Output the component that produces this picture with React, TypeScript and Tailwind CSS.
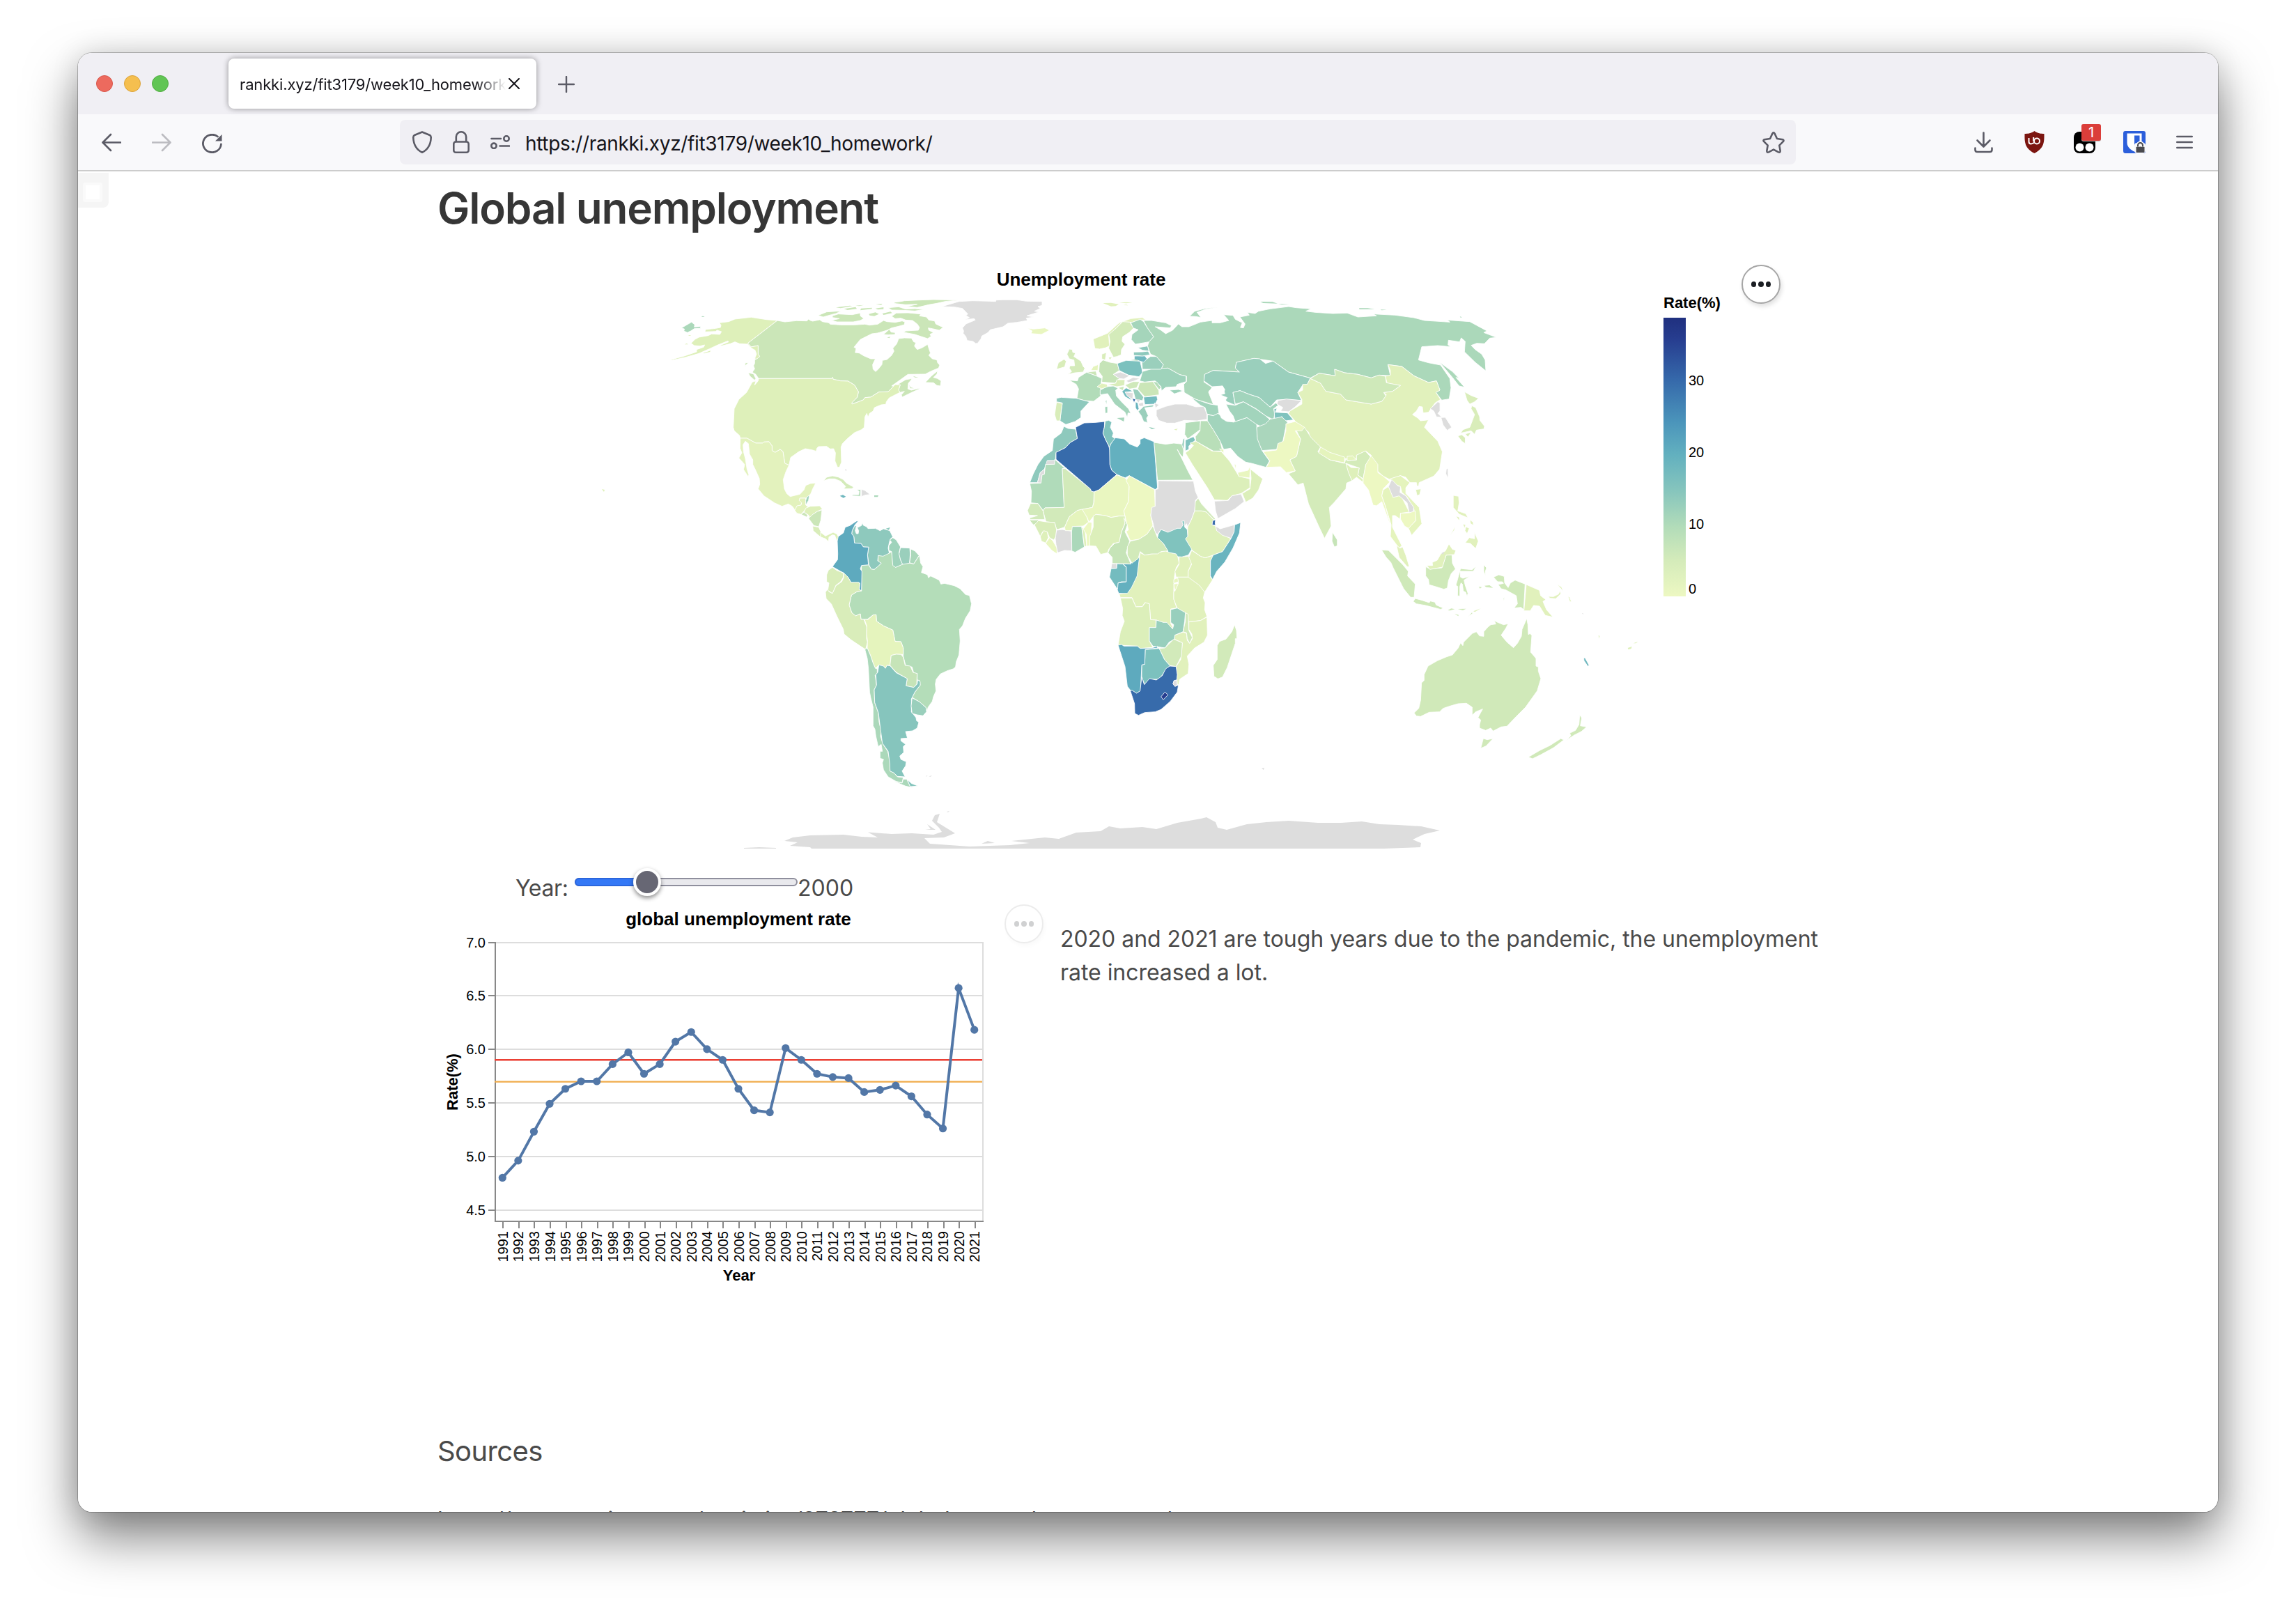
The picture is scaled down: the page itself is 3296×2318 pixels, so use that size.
import React from "react";

type Shape = [string, string];

const GREY = "#dddddd";
const US = "#def0ba";
const CA = "#cbe6b8";
const RU = "#abd8ba";
const ID = "#cfe9b9";

/* Country outlines, grouped by map sheet. Each sheet has its own origin and scale. */
const northAmerica: Shape[] = [
  [CA, "527,180 560,186 610,181 655,182 662,174 670,180 680,183 710,177 722,185 750,190 755,196 800,199 860,199 905,196 925,200 960,196 985,180 1000,185 1035,188 1065,182 1077,186 1075,198 1050,205 1020,212 1000,222 960,234 935,237 915,247 885,262 858,295 867,300 863,318 880,320 900,332 930,345 950,345 938,370 940,390 951,400 962,390 978,370 980,352 1000,348 1020,330 1030,312 1025,300 1042,280 1050,258 1075,255 1105,256 1115,272 1125,275 1118,290 1130,305 1150,298 1175,283 1180,300 1187,320 1180,330 1195,345 1215,350 1218,362 1227,372 1222,385 1190,398 1165,411 1090,412 1065,430 1020,462 1038,463 1055,450 1080,435 1108,430 1105,435 1092,450 1090,475 1105,480 1138,472 1140,475 1110,488 1065,510 1062,500 1075,485 1055,490 1050,478 1057,457 1035,456 1005,487 965,488 930,510 905,512 898,522 850,540 848,535 872,510 877,487 860,458 832,441 800,440 768,433 766,425 762,430 447,430 435,412 420,403 430,388 425,375 430,365 430,350 452,335 445,325 445,288 415,294 400,278"],
  [US, "447,430 762,430 766,425 768,433 800,440 832,441 860,458 877,487 872,510 848,535 850,540 898,522 905,512 930,510 965,488 1005,487 1035,456 1057,457 1050,478 1055,490 1035,500 1010,513 997,530 995,541 975,543 946,555 940,570 925,580 918,597 913,580 905,595 902,640 890,650 860,663 830,688 808,710 802,725 804,790 795,812 787,812 776,785 778,750 770,732 755,733 740,722 705,723 698,730 695,743 680,738 648,732 620,745 585,770 578,803 560,795 552,745 540,735 518,748 505,740 505,720 492,702 470,703 465,708 435,708 397,687 368,687 365,675 342,655 338,640 342,560 362,520 395,490 420,445 435,440 430,458 445,440"],
  [US, "527,180 480,176 415,166 345,174 318,185 278,190 285,200 283,210 262,214 218,219 216,229 262,227 268,222 287,228 280,240 245,238 230,245 190,252 172,262 156,278 170,288 195,290 215,285 210,295 180,305 180,315 130,332 65,350 75,351 130,339 190,322 235,302 272,285 315,268 318,272 280,288 285,290 325,280 345,272 365,280 400,282 410,293 418,300 432,308 438,325 430,345 440,345 452,335 445,325 445,288 415,294 400,278"],
  [US, "208,320 240,310 238,315 212,322"],
  [US, "128,283 138,279 143,283"],
  [US, "143,243 157,243 150,246"],
  [RU, "115,212 158,187 172,198 170,208 197,206 197,214 170,215 155,225 140,232 125,225 128,217"],
  [RU, "200,163 207,161 215,163 207,165"],
  [CA, "402,405 425,410 435,430 430,437 410,420"],
  [CA, "390,362 403,362 392,372 388,385"],
  [CA, "1218,397 1190,420 1165,447 1200,448 1215,460 1230,462 1233,440 1218,430 1200,425 1215,410"],
  [CA, "1112,419 1135,426 1120,425"],
  [CA, "1096,458 1102,468 1116,472 1100,472"],
  [CA, "703,158 740,143 785,140 800,141 780,150 760,155 725,165"],
  [CA, "765,160 790,152 850,155 885,148 885,160 900,172 885,180 855,186 785,186 760,180 795,172 765,167"],
  [CA, "780,124 840,116 850,118 800,127"],
  [CA, "815,130 865,122 870,130 830,135"],
  [CA, "888,128 935,125 935,130 885,136"],
  [CA, "922,152 950,145 965,152 945,161 925,158"],
  [CA, "950,128 985,123 985,131 960,133"],
  [CA, "952,110 980,108 975,113"],
  [CA, "865,116 900,113 880,118"],
  [CA, "1030,102 1060,98 1075,95 1140,92 1200,90 1310,92 1250,98 1215,106 1180,112 1130,124 1085,120 1130,110 1080,112 1035,107"],
  [CA, "1005,125 1050,121 1080,131 1120,129 1160,133 1120,139 1070,136 1020,135"],
  [CA, "980,150 1015,142 1022,148 985,156"],
  [CA, "1020,162 1040,148 1090,147 1145,152 1140,160 1170,165 1180,178 1205,182 1210,195 1242,210 1225,222 1195,215 1178,212 1180,222 1200,232 1185,240 1190,248 1175,258 1150,250 1120,240 1072,231 1080,225 1135,222 1140,210 1130,195 1110,180 1080,178 1060,170 1035,172"],
  [CA, "985,240 1010,218 1018,230 1035,232 1035,240 1005,242"],
  [CA, "1000,253 1015,250 1010,256"],
  ["#e3f2bd", "368,687 397,687 435,708 465,708 470,703 492,702 505,720 505,740 518,748 540,735 552,745 560,795 578,803 565,830 553,865 558,905 568,925 583,938 625,928 642,910 650,890 670,882 693,880 680,905 672,925 665,935 650,945 625,945 622,955 632,965 630,975 612,980 605,998 592,980 575,970 548,980 515,965 470,935 445,905 452,885 450,860 432,820 422,800 422,780 408,755 403,710 390,700 380,715 382,745 390,775 397,820 405,845 402,852 382,822 387,800 362,772 375,750 367,730"],
  ["#e3f2bd", "625,945 650,945 650,975 660,982 643,1000 630,1015 612,1010 603,998 612,978 630,975 632,965 622,955"],
  ["#9fd3bb", "666,932 662,955 650,975 650,955 655,940"],
  [US, "650,988 670,980 710,978 722,992 700,1002 680,1015 668,1028 662,1018 643,1005"],
  [CA, "630,1015 643,1005 658,1018 655,1027"],
  [CA, "662,1032 680,1015 700,1002 720,996 715,1040 706,1068 685,1063"],
  ["#d9edba", "680,1065 706,1070 716,1092 714,1112 705,1105 682,1085"],
  [US, "714,1092 735,1108 768,1092 785,1100 792,1115 785,1130 775,1105 765,1103 750,1112 748,1132 735,1120 714,1112"],
  ["#d4ebba", "726,871 740,855 765,849 790,854 812,865 825,880 856,897 850,904 813,905 822,895 800,872 775,862 750,862"],
  ["#70b8bf", "797,935 810,931 823,938 812,944"],
  ["#b4ddb9", "870,908 887,908 886,937 850,935 852,930 878,930 880,916"],
  [GREY, "890,907 905,912 927,929 905,932 890,938"],
  [RU, "945,933 963,933 960,940 945,940"],
  [GREY, "819,822 825,820 824,829"],
  [GREY, "1236,120 1310,98 1370,95 1440,97 1468,98 1470,92 1500,91 1560,91 1600,97 1668,98 1668,115 1650,120 1660,128 1635,140 1655,143 1602,160 1633,165 1600,170 1605,180 1560,188 1520,192 1500,207 1445,220 1435,232 1408,247 1405,258 1390,278 1382,279 1370,270 1345,266 1340,250 1328,235 1330,225 1325,212 1340,195 1380,178 1375,172 1335,177 1355,168 1340,158 1348,152 1325,128 1290,122"],
];

const southAmerica: Shape[] = [
  ["#b4ddb9", "290,275 320,272 332,290 345,292 362,278 375,265 362,258 362,232 410,222 420,215 425,268 437,283 465,270 490,263 515,268 530,245 540,232 545,265 555,280 548,305 575,315 578,328 588,320 625,338 632,355 648,352 690,362 715,375 738,400 755,404 764,440 758,470 738,502 725,535 712,550 715,600 710,660 698,690 695,712 685,720 660,728 630,742 612,765 608,785 611,815 600,840 595,860 577,885 572,902 568,887 540,862 508,843 520,820 543,790 540,770 530,768 530,740 515,738 508,712 480,705 470,665 470,630 460,603 435,602 425,553 385,535 355,515 353,487 340,488 315,507 288,507 285,483 265,492 248,478 237,445 247,402 270,388 290,384"],
  ["#8ec9bd", "262,103 250,125 248,138 257,150 260,178 288,180 298,195 321,196 316,230 322,272 332,290 345,292 362,278 375,265 360,255 362,232 383,235 410,222 405,200 410,175 415,160 425,152 412,125 385,117 370,125 350,115 318,116 312,108 298,102 294,90 290,103 272,112 278,125 276,138 268,138 263,125 268,105"],
  ["#8ec9bd", "395,116 413,111 408,122"],
  ["#5eaabe", "277,83 262,100 250,125 248,138 257,150 260,178 288,180 298,195 321,196 316,230 320,272 290,275 285,290 292,300 290,384 280,378 283,350 245,348 232,325 212,306 200,300 165,280 187,250 188,225 186,170 190,150 212,135 220,110 240,103 268,84"],
  ["#9fd3bb", "425,155 440,165 458,195 452,220 458,250 467,270 437,283 425,275 420,215 408,210 408,190 420,175 412,165"],
  ["#9acfbc", "458,198 498,200 500,225 497,265 467,270 458,250 452,225"],
  [RU, "502,204 520,212 538,232 515,268 497,263 502,235"],
  ["#d9edba", "212,306 232,325 245,348 278,347 283,355 280,378 290,384 270,388 247,402 237,445 248,478 265,492 285,483 288,507 300,507 313,540 312,590 316,605 308,637 290,625 245,595 215,570 212,550 185,495 160,440 138,418 135,390 145,375 150,388 165,395 180,362 205,345 214,325"],
  ["#d9edba", "165,283 185,297 200,302 212,308 212,325 200,345 180,360 165,395 145,382 150,350 140,345 140,315 148,295"],
  ["#e5f4bd", "303,507 318,508 340,488 353,487 355,515 385,535 425,553 435,602 460,603 470,630 470,658 440,657 418,662 413,705 400,705 393,718 385,708 365,703 350,718 340,695 330,665 315,630 316,600 312,570 313,535"],
  ["#c6e4b8", "418,662 440,657 460,658 470,670 478,705 500,708 512,735 530,740 528,785 515,800 482,793 487,762 440,735 413,705"],
  [RU, "315,630 330,665 340,695 350,718 358,720 358,738 349,748 355,790 345,810 347,865 363,910 366,950 375,985 372,1010 383,1045 403,1075 410,1105 415,1145 413,1160 430,1168 445,1185 470,1188 465,1210 440,1205 405,1185 385,1155 380,1125 385,1110 370,1105 370,1075 380,1075 375,1045 362,1055 352,1010 348,980 340,965 340,885 330,845 325,820 320,720 315,675 305,637"],
  ["#86c5bd", "365,703 385,708 393,718 400,705 413,707 440,737 487,762 482,793 515,800 530,785 532,768 543,775 543,790 520,820 505,850 505,905 525,930 527,943 537,950 530,975 510,987 480,990 488,1018 460,1020 460,1030 480,1045 470,1055 472,1080 455,1095 460,1110 483,1120 480,1138 465,1160 478,1185 445,1183 430,1168 413,1160 412,1130 405,1075 380,1040 372,980 363,910 347,865 345,810 355,790 352,745 360,735"],
  [RU, "470,1195 485,1195 500,1226 514,1232 480,1225 428,1203 465,1212"],
  ["#86c5bd", "487,1197 505,1213 534,1225 500,1227"],
  ["#9acfbc", "508,845 540,862 568,887 570,905 555,922 530,918 508,912 504,880"],
  [GREY, "566,1183 574,1179 573,1183"],
  [GREY, "580,1183 594,1179 588,1184"],
];

const northSheet: Shape[] = [
  ["#8ec9bd", "262,636 280,645 312,648 320,688 290,705 268,728 228,748 225,782 190,783 178,820 160,835 148,878 115,878 130,840 150,800 175,765 212,740 217,690 250,665"],
  [GREY, "190,785 222,782 222,799 185,799"],
  [GREY, "160,835 178,820 180,842 168,845 163,880 148,878"],
  ["#b0dbba", "115,882 163,880 168,845 178,842 182,800 222,799 222,778 268,818 255,818 263,985 180,987 172,998 150,968 120,965 122,915"],
  ["#d2eaba", "255,818 268,818 376,905 380,915 392,918 390,965 385,985 345,993 320,998 285,1025 265,1070 240,1078 230,1080 222,1050 185,1047 172,1000 180,987 263,985"],
  ["#376bab", "312,640 350,621 400,619 437,615 436,640 430,665 440,690 455,720 460,740 460,800 468,825 490,843 412,910 392,918 380,915 376,905 228,778 228,748 268,728 290,705 320,688"],
  ["#80c3be", "440,613 455,610 468,618 462,640 475,665 470,680 483,690 465,710 458,725 440,690 430,665 436,640"],
  ["#64b0bf", "483,685 522,690 545,712 578,725 590,710 590,692 608,685 650,702 665,900 655,908 543,848 525,858 490,843 468,825 460,800 458,725 465,710"],
  ["#b9dfb9", "650,705 700,713 735,708 770,712 778,735 775,768 765,760 750,735 775,785 797,830 817,867 665,868"],
  ["#e9f6c0", "412,910 490,845 525,858 535,870 543,895 540,960 520,1000 525,1022 500,1022 465,1028 440,1020 400,1015 388,1025 370,1048 360,1025 342,1012 342,993 385,985 392,960 392,918"],
  ["#edf8c2", "543,848 652,908 655,980 640,990 636,1020 645,1062 620,1100 585,1122 548,1128 530,1088 540,1082 530,1045 520,1000 540,960 543,895 530,870"],
  [GREY, "668,870 820,872 828,915 840,942 828,955 825,1000 812,1035 795,1070 790,1055 770,1080 750,1085 710,1092 680,1080 665,1100 655,1095 645,1050 636,1020 640,985 655,980 655,908 667,905"],
  ["#d2eaba", "840,945 855,970 915,1035 908,1038 875,1005 855,1000 825,1000 828,960"],
  ["#def0ba", "825,1000 855,1000 875,1005 910,1042 900,1060 915,1065 920,1085 980,1120 945,1175 905,1190 870,1202 850,1195 812,1168 785,1120 795,1110 795,1070 812,1035"],
  ["#376bab", "903,1042 915,1038 913,1052 915,1062 900,1060"],
  [GREY, "915,1066 935,1077 995,1060 995,1090 982,1118 945,1105 920,1085"],
  ["#6ab4bf", "997,1060 1023,1050 1018,1095 990,1160 955,1220 920,1260 902,1295 893,1280 893,1215 905,1190 945,1175 982,1118 995,1090"],
  ["#80c3be", "668,1100 680,1080 710,1092 750,1075 765,1075 775,1060 770,1045 780,1042 782,1070 793,1080 795,1110 785,1120 812,1165 798,1190 770,1198 752,1197 745,1185 712,1178 690,1140 665,1115"],
  ["#d2eaba", "118,968 150,968 172,1000 180,1037 115,1037 115,1030 148,1020 112,1018 105,998"],
  [CA, "113,1039 152,1039 150,1052 130,1060"],
  ["#d9edba", "152,1042 185,1047 222,1050 230,1080 228,1110 218,1125 200,1115 190,1090 170,1090 160,1110 135,1060"],
  ["#def0ba", "160,1110 175,1085 190,1090 195,1115 183,1138 165,1130"],
  ["#e9f6c0", "183,1140 200,1115 215,1130 232,1160 232,1185 210,1170"],
  [GREY, "230,1083 255,1080 293,1087 297,1172 265,1170 235,1180 228,1145 225,1120"],
  ["#e5f4bd", "265,1070 285,1025 320,998 340,993 360,1025 368,1048 345,1065 300,1067 297,1085 268,1085"],
  [RU, "298,1067 338,1067 350,1155 310,1178 296,1172 295,1090"],
  ["#def0ba", "340,1070 352,1080 360,1150 350,1155"],
  ["#edf8c2", "345,1078 368,1048 382,1050 380,1095 373,1150 360,1152 358,1100"],
  ["#dcefba", "388,1022 400,1015 440,1020 465,1028 500,1022 525,1022 528,1045 510,1090 500,1135 475,1140 455,1165 450,1180 420,1187 400,1152 373,1150 373,1110 388,1070"],
  ["#c6e4b8", "520,1030 535,1060 525,1090 545,1130 530,1180 550,1228 470,1226 470,1200 452,1180 460,1160 480,1140 500,1135 510,1090 525,1055"],
  ["#d2eaba", "548,1130 585,1122 620,1100 645,1065 665,1115 690,1140 710,1172 680,1175 665,1185 640,1185 610,1190 590,1175 582,1205 555,1225 535,1190 535,1155"],
  ["#e9f6c0", "105,213 130,217 180,212 200,222 165,240 120,236 125,225"],
  ["#e1f1bc", "430,105 465,104 498,110 485,118 465,119"],
  ["#e1f1bc", "500,103 530,101 557,103 530,106"],
  ["#e1f1bc", "518,114 530,112 538,115"],
  ["#e1f1bc", "388,260 450,235 500,190 550,172 600,167 615,178 590,177 555,188 510,188 480,220 455,245 458,290 440,298 415,303 395,300"],
  ["#d4ebba", "455,240 485,215 515,185 545,187 562,212 545,230 515,250 512,270 525,282 510,305 508,328 490,335 475,338 455,300 460,270"],
  [RU, "605,180 640,180 700,190 725,202 720,212 655,207 680,222 700,237 730,222 755,195 770,207 800,207 850,187 900,180 900,190 935,190 972,180 950,155 990,158 1000,175 1030,190 1022,210 1035,212 1042,195 1020,165 1060,157 1052,145 1085,150 1100,140 1150,130 1230,120 1262,125 1327,130 1304,140 1344,145 1420,150 1482,148 1528,165 1608,160 1595,152 1688,157 1769,168 1815,180 1924,187 1912,178 2010,185 2084,225 2070,232 2125,253 2096,256 2073,280 2040,278 2016,287 2033,305 2061,325 2076,350 2079,397 2033,360 1987,315 1990,270 1973,255 1966,272 1918,265 1916,285 1929,293 1872,288 1803,293 1789,350 1832,362 1884,372 1924,430 1929,470 1921,518 1889,523 1864,490 1881,480 1866,440 1832,447 1769,418 1717,378 1657,370 1668,418 1620,415 1585,427 1528,412 1470,405 1428,390 1430,418 1361,407 1323,428 1229,402 1163,355 1080,343 1005,360 1000,385 1018,402 905,395 868,412 865,445 900,468 885,490 905,540 925,548 865,530 830,520 780,490 778,455 790,443 790,420 760,413 710,385 680,390 690,370 660,335 635,325 622,290 628,272 648,250 620,210"],
  ["#a5d5bb", "550,190 590,175 605,185 620,210 648,250 628,272 570,282 552,262 555,240 582,220 560,212"],
  [RU, "803,162 825,140 870,128 928,122 870,132 835,145 852,167 830,163"],
  [RU, "1108,99 1160,100 1182,107 1120,105"],
  [RU, "1186,108 1232,111 1200,112"],
  [RU, "1533,127 1570,127 1600,131 1535,132"],
  [RU, "1625,133 1652,134 1630,136"],
  [RU, "1967,163 1977,166 1970,167"],
  [RU, "1880,360 1935,400 1964,430 1950,425 1987,467 1964,462 1935,425"],
  ["#d4ebba", "285,303 298,305 300,317 312,320 305,335 335,355 345,378 352,385 345,402 310,405 278,412 295,400 285,385 288,375 308,375 305,350 285,345 275,325"],
  ["#d9edba", "238,362 262,347 272,355 265,380 230,390"],
  ["#d9edba", "425,325 445,318 442,335 440,350 425,345"],
  ["#d9edba", "455,340 468,338 460,348"],
  ["#c6e4b8", "415,365 430,350 460,360 492,365 500,395 475,412 500,430 482,450 425,445 427,420 412,400"],
  ["#e5f4bd", "388,378 410,370 408,395 378,395"],
  [CA, "360,402 400,398 405,420 385,412"],
  ["#b2dcb9", "285,437 320,440 325,425 360,403 405,420 425,430 420,460 420,505 390,528 350,525 318,515 325,475 315,455"],
  ["#8ec9bd", "230,515 250,511 315,515 372,530 335,570 335,598 310,615 270,628 245,612 250,570 255,535 230,530"],
  ["#d9edba", "230,532 255,537 250,570 245,612 230,612 222,585"],
  ["#a5d5bb", "418,480 445,465 475,462 495,472 485,480 488,505 510,530 540,560 550,580 538,578 535,598 525,575 480,540 450,495 418,500"],
  ["#a5d5bb", "490,600 522,598 520,615"],
  ["#a5d5bb", "438,552 450,550 450,578 440,580"],
  ["#a5d5bb", "440,527 447,522 446,543"],
  ["#e1f1bc", "405,465 425,450 448,455 450,465 425,474"],
  ["#d9edba", "448,455 485,450 490,435 525,435 522,460 490,465"],
  ["#7cc1be", "492,365 530,352 590,355 598,390 600,405 585,422 540,415 500,395"],
  [GREY, "475,412 505,402 545,418 520,432 500,430"],
  [GREY, "530,440 560,425 590,430 560,442 540,447"],
  ["#cfe9ba", "525,458 560,443 588,443 575,470 545,475"],
  [CA, "588,448 645,443 670,480 672,500 610,508 580,475"],
  ["#9fd3bb", "592,430 600,400 640,388 710,385 760,413 788,420 788,443 750,455 745,465 700,468 682,483 680,465 655,440 610,445 588,440"],
  ["#b4ddb9", "645,443 662,445 680,468 672,478"],
  ["#9fd3bb", "717,480 755,477 775,483 738,496"],
  ["#9acfbc", "598,360 635,335 660,335 690,370 680,390 600,390"],
  ["#70b8bf", "565,333 610,332 620,345 605,360 565,347"],
  ["#8ec9bd", "562,316 600,315 625,312 632,328 600,333 562,330"],
  ["#8ec9bd", "580,297 622,290 628,312 600,308"],
  [RU, "550,351 578,347 580,353"],
  [CA, "498,470 520,465 515,480"],
  ["#74bcbf", "512,485 530,470 560,485 528,488 555,525 525,508"],
  [GREY, "525,488 560,492 558,520 535,505"],
  ["#98cfbd", "558,474 580,478 605,510 600,525 570,520"],
  ["#376bab", "556,515 571,519 564,534"],
  ["#6ab4bf", "570,530 580,535 585,560 577,568 570,555"],
  [GREY, "582,538 603,532 605,548 588,550"],
  [GREY, "573,520 590,520 583,533"],
  ["#74bcbf", "605,510 662,505 665,520 655,540 610,542"],
  ["#9acfbc", "582,572 605,550 650,543 645,552 610,556 625,590 618,600 622,620 605,615 595,590"],
  ["#9acfbc", "628,639 656,644 640,648"],
  [GREY, "660,565 700,550 740,540 790,540 830,552 865,550 878,585 878,605 835,612 780,610 740,622 705,622 670,610 660,590"],
  [GREY, "652,535 672,543 656,557"],
  ["#e1f1bc", "736,649 752,646 746,653"],
  ["#b4ddb9", "785,620 850,612 848,650 795,690 782,670"],
  ["#b9dfb9", "850,612 880,612 905,650 935,700 945,742 905,742 830,700 828,680 848,655"],
  ["#80c3be", "785,695 820,680 828,695 800,720 800,735 785,742"],
  ["#98cfbd", "775,690 782,688 778,740 770,715"],
  ["#a2d4bc", "810,512 860,530 890,540 925,545 930,580 905,590 878,582 870,555 850,545"],
  ["#a2d4bc", "880,585 905,590 925,580 950,600 965,615 1000,615 1050,598 1092,625 1095,680 1115,740 1147,785 1132,812 1070,795 1045,790 1010,765 980,730 950,735 935,700 905,650 880,612"],
  ["#dcefba", "830,700 900,742 940,745 975,785 1000,825 1015,850 1062,862 1063,900 1025,925 985,935 965,955 910,952 880,900 815,800 785,750 805,735 820,718 805,708"],
  ["#e5f4bd", "932,733 950,735 950,752"],
  ["#e9f6c0", "1010,835 1055,825 1065,805 1062,858 1015,852"],
  ["#e9f6c0", "995,798 1003,802 1002,822"],
  ["#dcefba", "1065,820 1118,862 1100,910 1075,945 1045,962 1030,925 1063,905 1068,860"],
  [GREY, "910,958 970,955 985,935 1025,927 1038,960 1000,990 925,1033 915,1000"],
  ["#9acfbc", "1005,360 1080,343 1105,345 1130,365 1163,355 1229,402 1323,428 1310,455 1290,458 1269,490 1285,524 1220,520 1178,522 1150,553 1103,512 1060,498 1020,482 990,490 1000,545 965,530 935,500 955,495 945,462 900,465 865,440 868,412 905,395 1018,402 1000,385"],
  ["#a2d4bc", "990,490 1020,482 1060,498 1103,512 1150,553 1175,535 1185,545 1165,560 1170,580 1165,608 1130,590 1090,560 1035,530 1000,540"],
  ["#a2d4bc", "960,540 1000,545 1035,530 1090,562 1130,590 1150,608 1120,640 1092,628 1050,598 1000,615 990,590 975,570"],
  ["#80c3be", "1167,560 1180,558 1172,575 1225,578 1250,608 1215,612 1200,593 1190,605 1170,608"],
  [GREY, "1183,525 1220,518 1285,525 1260,550 1230,573 1195,570 1205,555 1180,540"],
  ["#aad6bc", "1092,640 1130,625 1150,605 1200,595 1225,618 1215,650 1205,700 1180,735 1115,740 1095,690"],
  ["#ffffff", "885,485 905,468 945,462 955,478 950,490 935,500 965,512 950,535 960,565 990,590 995,618 960,613 940,600 930,575 925,540 905,510"],
];

const southAfrica: Shape[] = [
  ["#e1f1bc", "590,220 610,230 640,225 700,212 720,220 750,225 758,265 745,285 738,320 735,370 735,420 748,458 722,462 722,525 735,548 720,540 690,520 660,510 635,508 630,440 610,435 600,452 572,453 555,413 505,413 500,398 515,395 535,390 553,370 553,335 575,320 585,250"],
  ["#64b0bf", "565,240 587,240 577,320 553,370 535,395 498,395 490,375 495,350 530,345 530,280 515,268 550,268"],
  ["#74bcbf", "490,267 515,268 530,283 530,345 510,345 495,350 493,378 458,325 465,288 488,287"],
  [GREY, "468,267 489,266 489,287 465,287"],
  ["#e1f1bc", "758,238 800,235 812,265 797,300 797,325 745,325 740,300 758,270"],
  ["#e1f1bc", "812,210 850,235 870,242 905,232 893,255 893,325 902,337 868,390 845,370 797,325 797,300 812,270 800,240"],
  ["#e1f1bc", "750,325 797,325 845,360 868,390 862,415 870,435 868,465 878,495 850,512 800,518 785,480 750,460 735,420 735,390 755,350"],
  ["#e9f6c0", "735,335 752,328 755,345 735,352"],
  ["#e9f6c0", "735,355 755,352 740,385"],
  ["#dcefba", "505,415 555,415 572,453 600,452 612,435 630,440 635,508 658,510 658,542 630,542 630,600 645,628 590,632 578,622 495,618 505,560 522,515 513,490 515,460"],
  ["#98cfbd", "722,465 750,458 785,478 782,515 775,560 740,575 738,592 715,605 697,630 645,622 630,600 630,542 658,542 660,510 690,520 705,520 730,548 735,530 722,520"],
  ["#e1f1bc", "800,518 850,512 878,497 880,575 865,605 825,630 793,665 800,700 797,740 760,765 757,788 750,788 748,745 745,710 765,680 772,608 738,592 740,575 775,562 790,567 793,597 803,610 815,590 813,570 800,550"],
  ["#d2eaba", "785,478 797,485 800,555 815,585 803,610 793,590 790,565 775,560 785,515"],
  ["#d2eaba", "672,632 697,630 735,592 772,608 768,665 745,710 718,706 695,680"],
  ["#7cc1be", "612,637 672,632 695,680 718,706 690,740 672,765 650,765 630,765 610,788 597,755 597,703 610,700"],
  ["#5eaabe", "495,618 510,615 520,622 578,622 590,632 640,630 665,622 665,630 612,637 610,700 597,703 592,815 575,825 548,812 535,795 525,710"],
  ["#376bab", "548,815 555,812 575,825 590,815 597,755 608,788 630,762 660,768 685,750 700,720 718,708 745,710 750,745 748,768 735,772 733,785 742,795 755,790 750,820 720,860 680,895 655,905 610,908 583,920 567,912 566,870"],
  [GREY, "737,770 748,768 750,790 740,796 731,784"],
  ["#253c90", "680,840 697,820 710,832 690,853"],
  ["#d2eaba", "997,530 1005,555 1007,590 1000,590 1000,610 985,655 965,715 945,755 925,763 908,752 905,705 922,680 922,620 932,602 960,592 985,560"],
];

const asia: Shape[] = [
  ["#e1f1bc", "212,430 250,450 270,485 325,497 345,522 440,540 480,528 497,500 487,490 520,485 550,460 500,450 493,420 512,415 512,395 503,370 555,378 600,418 655,447 685,440 698,480 683,490 700,520 680,535 655,575 635,578 632,552 620,550 610,570 595,585 615,600 625,612 655,608 640,640 690,700 707,745 697,820 675,850 620,878 618,893 612,893 610,878 585,878 570,855 550,848 510,865 485,850 465,830 440,760 420,742 385,760 385,775 345,775 285,765 250,725 215,700 205,660 160,620 130,580 135,570 180,540 180,520 165,490 183,480 183,455 200,455"],
  ["#def0ba", "607,908 627,905 622,930 612,934"],
  ["#cfe9ba", "212,430 245,407 305,418 303,390 340,405 390,412 440,427 470,415 493,420 497,448 550,460 520,485 487,490 495,505 480,528 440,540 345,522 325,497 270,485 250,450"],
  ["#d4ebba", "160,655 190,640 215,685 250,725 240,745 285,780 340,795 345,775 350,783 385,780 385,760 418,742 440,770 420,800 410,862 390,845 395,815 345,795 368,870 348,880 345,905 300,965 283,985 290,1065 265,1118 245,1070 205,970 185,880 165,888 130,840 155,828 135,780 160,765 175,690"],
  ["#edf8c2", "120,625 155,615 190,640 180,655 155,655 175,690 160,765 135,780 155,828 122,835 100,810 47,812 60,785 35,745 85,738 90,710 110,700 120,655"],
  ["#e5f4bd", "250,725 285,748 340,768 340,793 285,780 243,750"],
  ["#e5f4bd", "350,765 370,763 385,780 350,783"],
  ["#def0ba", "345,795 365,813 395,815 390,845 410,865 408,875 385,855 368,870 355,835"],
  ["#edf8c2", "440,762 465,800 465,835 485,850 510,875 485,905 480,935 495,985 505,1030 515,1065 505,1040 480,960 460,978 447,975 430,910 410,880 410,860 420,800"],
  ["#e5f4bd", "485,910 505,895 525,940 550,930 583,1005 550,1010 548,1035 530,1020 520,1020 520,1070 555,1150 545,1160 512,1110 515,1060 495,985 480,935"],
  ["#e5f4bd", "510,862 550,848 585,878 570,900 570,925 620,985 630,1055 592,1105 580,1075 608,1040 600,990 575,940 555,920 550,895 530,885"],
  [GREY, "505,895 517,865 540,892 550,895 548,920 570,935 600,985 598,1005 583,1008 575,965 545,935 522,942"],
  ["#edf8c2", "550,1010 583,1008 605,1000 608,1040 580,1075 565,1065 550,1035"],
  ["#e1f1bc", "535,1148 548,1160 558,1155 570,1190 583,1240 575,1240 545,1200"],
  ["#e1f1bc", "748,933 768,937 770,965 765,1000 795,1012 803,1030 770,1014 748,985"],
  ["#e1f1bc", "760,1024 770,1028 770,1040"],
  ["#e1f1bc", "793,1137 808,1115 828,1120 828,1093 842,1130 832,1162 812,1140"],
  ["#e1f1bc", "784,1056 795,1060 790,1075"],
  ["#e1f1bc", "795,1068 808,1075 800,1098 792,1085"],
  ["#e1f1bc", "810,1038 822,1048 824,1062 813,1055"],
  ["#e1f1bc", "755,1066 752,1082 736,1106"],
  [GREY, "722,820 728,816 729,860 720,840"],
  ["#d9edba", "790,487 815,503 843,515 828,530 810,540 800,525"],
  ["#d9edba", "817,547 832,555 847,595 848,610 865,635 863,647 835,652 828,670 815,655 775,665 785,650 810,640 820,610 828,585 815,560"],
  ["#d9edba", "765,677 780,672 793,685 793,710 780,700"],
  ["#d9edba", "793,668 815,662 803,682"],
  [GREY, "662,560 690,530 698,535 698,570 690,580 705,597 685,595 675,570"],
  [GREY, "702,598 718,597 742,640 725,653 710,630"],
  ["#c6e4b8", "295,1092 313,1125 313,1150 302,1155 293,1130"],
];

const oceania: Shape[] = [
  [ID, "250,208 280,210 340,270 365,300 362,320 395,355 390,412 375,412 345,375 325,335 300,285 290,262 270,240"],
  [ID, "440,280 458,290 510,285 528,230 553,230 555,265 568,290 550,310 538,340 533,372 518,377 480,365 455,358 452,335 440,320"],
  ["#e1f1bc", "445,275 470,275 468,262 490,252 505,225 525,212 540,182 555,205 570,210 563,228 528,230 512,282 458,292"],
  [GREY, "508,222 520,215 515,228"],
  [ID, "386,430 395,417 425,425 455,435 460,428 480,433 485,445 515,458 505,464 440,447 400,440"],
  [ID, "535,468 550,460 565,463 545,469"],
  [ID, "578,462 614,461 600,468"],
  [ID, "564,482 582,488 580,493"],
  [ID, "623,494 640,475 642,482"],
  ["#e1f1bc", "645,472 677,460 652,475"],
  [ID, "590,288 605,290 640,293 657,278 645,300 588,300 590,325 600,330 630,321 605,338 610,360 622,395 618,407 612,390 602,385 598,355 592,350 587,365 587,407 577,405 578,365 570,360 580,325"],
  [ID, "690,272 702,285 697,300 698,320 690,300"],
  [ID, "693,362 715,360 730,371 700,368"],
  [ID, "668,367 682,368 674,374"],
  [ID, "774,417 780,410 776,428"],
  [ID, "732,325 755,315 778,322 780,350 795,370 805,350 825,338 868,355 862,465 850,455 820,458 835,440 830,405 785,380 765,375 752,357 775,352 770,345 750,345"],
  ["#e1f1bc", "873,357 930,382 935,405 957,422 945,430 960,465 988,497 955,490 930,450 905,447 890,470 863,470"],
  ["#e1f1bc", "968,408 990,409 1012,398 1018,384 1022,397 1000,418 975,416"],
  ["#e1f1bc", "1005,354 1025,368 1033,388 1020,372"],
  ["#e1f1bc", "1053,405 1060,412 1068,432 1060,430"],
  [GREY, "1113,480 1122,484 1115,484"],
  ["#70b8bf", "1120,672 1127,674 1144,705 1138,709 1122,685"],
  [US, "1310,630 1328,624 1325,633 1313,637"],
  [US, "1334,610 1354,603 1345,610"],
  [US, "1184,576 1189,578 1187,590"],
  ["#d0e9b9", "735,512 750,520 775,530 795,526 785,545 765,575 790,605 818,629 835,610 852,580 855,550 875,503 880,530 882,572 890,568 897,577 892,648 915,675 915,708 925,712 925,730 936,762 920,815 895,850 870,885 830,925 790,967 765,970 730,988 720,975 698,985 672,975 672,960 677,940 665,930 685,893 655,905 640,920 640,885 615,868 580,870 545,880 515,890 500,905 455,907 418,925 400,923 390,910 410,890 418,855 422,780 433,770 433,745 450,708 490,685 530,668 555,660 580,630 590,608 600,620 603,605 640,568 658,560 672,578 690,580 690,560 708,540 720,530 742,527"],
  ["#d0e9b9", "688,1020 705,1025 730,1020 700,1052 677,1062"],
  ["#d0e9b9", "1103,918 1112,932 1106,965 1133,970 1110,990 1080,1005 1045,1028 1065,1008 1060,997 1085,985 1100,960"],
  ["#d0e9b9", "882,1100 930,1072 975,1050 1022,1020 1035,1026 990,1060 935,1090 900,1107"],
];

const polar: Shape[] = [
  [GREY, "1108,1205 1126,1207 1138,1202 1163,1199 1211,1198 1237,1201 1260,1202 1246,1194.500 1280,1197 1309,1196 1340,1198 1352,1194 1348,1188 1338,1178 1342,1170 1349,1168 1345,1180 1358,1188 1371,1196 1355,1202 1327,1203 1335,1211 1392,1215 1450,1213 1478,1210 1452,1207 1500,1202 1520,1204 1545,1195 1580,1193 1592,1186 1608,1189 1640,1187 1660,1190 1690,1181 1724,1175 1732,1173 1745,1180 1748,1188 1761,1191 1790,1183 1818,1180 1850,1178 1892,1181 1925,1181 1955,1179 1980,1183 2007,1184 2040,1186 2067,1192 2045,1197 2028,1205 2040,1210 2039,1216 1986,1218 1165,1218 1163,1216 1134,1214 1145,1209"],
  [GREY, "1068,1217 1090,1216 1114,1217 1114,1218 1068,1218"],
  [GREY, "1328,1191 1336,1190 1331,1183 1343,1191"],
  [GREY, "1409,1211 1418,1207 1428,1210"],
  [GREY, "1359,1165 1363,1164 1361,1166"],
  [US, "864,702 868,703 867,706"],
  [GREY, "1811,1103 1815,1102 1814,1105"],
];

const sheets = [
  { id: "na", transform: "translate(940 400) scale(0.33333)", shapes: northAmerica },
  { id: "sa", transform: "translate(1140 720) scale(0.33333)", shapes: southAmerica },
  { id: "south", transform: "translate(1440 720) scale(0.33333)", shapes: southAfrica },
  { id: "north", transform: "translate(1440 400) scale(0.33333)", shapes: northSheet },
  { id: "asia", transform: "translate(1800 400) scale(0.38265 0.33333)", shapes: asia },
  { id: "oceania", transform: "translate(1900 720) scale(0.33333)", shapes: oceania },
  { id: "polar", transform: "", shapes: polar },
];

/* Slivers and islets would vanish under a border line, so they are drawn without one. */
function borderOpacity(sheetId: string, points: string) {
  if (sheetId === "polar") return 0;
  const ys = points.split(" ").map((p) => Number(p.split(",")[1]));
  return Math.max(...ys) - Math.min(...ys) < 18 ? 0 : 0.85;
}

const helvetica = "'Liberation Sans', Arial, sans-serif";

function WorldMap() {
  return (
    <svg className="block h-[870px] w-[1980px]" viewBox="628 360 1980 870" fontFamily={helvetica}>
      <defs>
        <linearGradient id="rate" x1="0" y1="0" x2="0" y2="1">
          <stop offset="0" stopColor="#20307f" />
          <stop offset="0.08" stopColor="#273e90" />
          <stop offset="0.22" stopColor="#3568aa" />
          <stop offset="0.375" stopColor="#4b95bb" />
          <stop offset="0.49" stopColor="#62b0bf" />
          <stop offset="0.62" stopColor="#86c5bd" />
          <stop offset="0.75" stopColor="#b2dcb9" />
          <stop offset="0.87" stopColor="#d4ebba" />
          <stop offset="1" stopColor="#edf8c2" />
        </linearGradient>
      </defs>
      <text x="1552" y="410" textAnchor="middle" fontSize="26" fontWeight="700">
        Unemployment rate
      </text>
      {sheets.map((sheet) => (
        <g key={sheet.id} transform={sheet.transform}>
          {sheet.shapes.map(([fill, points], i) => (
            <polygon key={i} points={points} fill={fill} stroke="#fff" strokeOpacity={borderOpacity(sheet.id, points)} strokeWidth="1" vectorEffect="non-scaling-stroke" strokeLinejoin="round" />
          ))}
        </g>
      ))}
      <text x="2388" y="442" fontSize="22" fontWeight="700">
        Rate(%)
      </text>
      <rect x="2388" y="456" width="32" height="400" fill="url(#rate)" />
      <g fontSize="20">
        <text x="2424" y="553">30</text>
        <text x="2424" y="656">20</text>
        <text x="2424" y="759">10</text>
        <text x="2424" y="852">0</text>
      </g>
    </svg>
  );
}

const rates = [
  4.8, 4.96, 5.23, 5.49, 5.63, 5.7, 5.7, 5.86, 5.97, 5.77, 5.86, 6.07, 6.16, 6.0, 5.9, 5.63, 5.43, 5.41, 6.01, 5.9, 5.77, 5.74, 5.73, 5.6, 5.62, 5.66, 5.56, 5.39, 5.26, 6.57, 6.18,
];
const px = (i: number) => 710 + (700 / 31) * (i + 0.5);
const py = (v: number) => 1352 + ((7 - v) * 400) / 2.6;

function LineChart() {
  return (
    <svg className="block h-[560px] w-[800px]" viewBox="628 1300 800 560" fontFamily={helvetica}>
      <text x="1060" y="1328" textAnchor="middle" fontSize="26" fontWeight="700">
        global unemployment rate
      </text>
      <rect x="711" y="1353" width="700" height="400" fill="none" stroke="#ddd" strokeWidth="2" />
      {[7, 6.5, 6, 5.5, 5, 4.5].map((v) => {
        const y = Math.floor(py(v)) + 1;
        return (
          <g key={v}>
            <line x1="711" x2="1411" y1={y} y2={y} stroke="#ddd" strokeWidth="2" />
            <line x1="701" x2="711" y1={y} y2={y} stroke="#888" strokeWidth="2" />
            <text x="697" y={y + 6.5} textAnchor="end" fontSize="20">
              {v.toFixed(1)}
            </text>
          </g>
        );
      })}
      <path d="M711 1352V1753H1412" fill="none" stroke="#888" strokeWidth="2" />
      <line x1="710" x2="1410" y1="1521.2" y2="1521.2" stroke="#eb4034" strokeWidth="2.4" />
      <line x1="710" x2="1410" y1="1552.6" y2="1552.6" stroke="#f0ab4a" strokeWidth="2.4" />
      {rates.map((_, i) => {
        const x = Math.round(px(i)) + 1;
        return (
          <g key={i}>
            <line x1={x} x2={x} y1="1753" y2="1763" stroke="#888" strokeWidth="2" />
            <text transform={`translate(${px(i) + 7.5} 1767) rotate(-90)`} textAnchor="end" fontSize="20">
              {1991 + i}
            </text>
          </g>
        );
      })}
      <polyline points={rates.map((v, i) => `${px(i)},${py(v)}`).join(" ")} fill="none" stroke="#5277a7" strokeWidth="4" strokeMiterlimit="10" />
      {rates.map((v, i) => (
        <circle key={i} cx={px(i)} cy={py(v)} r="5.6" fill="#5277a7" />
      ))}
      <text x="1061" y="1838" textAnchor="middle" fontSize="22" fontWeight="700">
        Year
      </text>
      <text transform="translate(657 1553) rotate(-90)" textAnchor="middle" fontSize="22" fontWeight="700">
        Rate(%)
      </text>
    </svg>
  );
}

function MenuDots({ className }: { className: string }) {
  return (
    <button className={"absolute flex size-14 items-center justify-center gap-[3px] rounded-full border-2 border-[#a6a6a6] bg-white shadow-[2px_4px_6px_rgba(0,0,0,0.12)] " + className}>
      <span className="size-[7.5px] rounded-full bg-[#1b1e23]" />
      <span className="size-[7.5px] rounded-full bg-[#1b1e23]" />
      <span className="size-[7.5px] rounded-full bg-[#1b1e23]" />
    </button>
  );
}

function TabStrip() {
  return (
    <div className="flex h-[88px] items-start bg-[#f0eff4] pt-2 pl-[26px]">
      <div className="mt-6 flex gap-4">
        <span className="size-6 rounded-full border border-[#d8564b] bg-[#ed6a5e]" />
        <span className="size-6 rounded-full border border-[#dba33a] bg-[#f5bf4f]" />
        <span className="size-6 rounded-full border border-[#51ac42] bg-[#61c554]" />
      </div>
      <div className="ml-[86px] flex h-[72px] w-[442px] items-center rounded-lg bg-white pl-4 shadow-[0_0_8px_rgba(0,0,0,0.4)]">
        <div className="w-[382px] overflow-hidden pt-[3px] text-[22px] tracking-[-0.15px] whitespace-nowrap text-[#15141a] [mask-image:linear-gradient(to_right,black_340px,transparent_382px)]">
          rankki.xyz/fit3179/week10_homework/
        </div>
        <svg className="ml-1 size-4" viewBox="0 0 16 16" stroke="#15141a" strokeWidth="2" strokeLinecap="round">
          <path d="M1 1L15 15M15 1L1 15" />
        </svg>
      </div>
      <svg className="mt-[25px] ml-[31px] size-6" viewBox="0 0 24 24" stroke="#5b5b66" strokeWidth="2.4" strokeLinecap="round">
        <path d="M12 1V23M1 12H23" />
      </svg>
    </div>
  );
}

function Toolbar() {
  return (
    <div className="flex h-[82px] items-center border-b-2 border-[#cccccc] bg-[#f9f9fb] pl-[34px]">
      <svg className="size-7" viewBox="0 0 28 28" fill="none" stroke="#5b5b66" strokeWidth="2.6" strokeLinecap="round" strokeLinejoin="round">
        <path d="M27 14.500H2M13 3L1.500 14.500L13 26" />
      </svg>
      <svg className="ml-11 size-7" viewBox="0 0 28 28" fill="none" stroke="#bcbcc1" strokeWidth="2.6" strokeLinecap="round" strokeLinejoin="round">
        <path d="M1 14.500H26M15 3L26.500 14.500L15 26" />
      </svg>
      <svg className="mt-1 ml-11 h-7 w-[29px]" viewBox="0 0 29 28" fill="none" stroke="#5b5b66" strokeWidth="2.800" strokeLinecap="round">
        <path d="M27.400 15A13 12.700 0 1 1 22.500 4" />
        <path d="M28.500 1V10.500H19Z" fill="#5b5b66" stroke="none" />
      </svg>
      <div className="ml-[255px] flex h-16 w-[2004px] items-center rounded-lg bg-[#f0eff4] pl-[18px]">
        <svg className="h-8 w-7" viewBox="0 0 28 32" fill="none" stroke="#5b5b66" strokeWidth="2.600" strokeLinejoin="round">
          <path d="M14 1.500L25 6Q26.800 7 26.700 9.500C26.500 19 22 27.500 14 30.700C6 27.500 1.500 19 1.300 9.500Q1.200 7 3 6Z" />
        </svg>
        <svg className="ml-[30px] h-8 w-6" viewBox="0 0 24 32" fill="none" stroke="#5b5b66" strokeWidth="2.600">
          <rect x="1.300" y="15.500" width="21.400" height="15.200" rx="3" />
          <path d="M4.800 15V8.500A7.200 7.200 0 0 1 19.200 8.500V15" />
        </svg>
        <svg className="ml-[30px] h-5 w-7" viewBox="0 0 28 20" fill="none" stroke="#5b5b66" strokeWidth="2.600" strokeLinecap="round">
          <path d="M1.500 5H15M13.500 15.500H27" />
          <circle cx="23" cy="5" r="3.700" />
          <circle cx="5" cy="15.300" r="3.700" />
        </svg>
        <span className="ml-[22px] pt-[3px] text-[28px] leading-8 tracking-[-0.33px] text-[#15141a]">https://rankki.xyz/fit3179/week10_homework/</span>
        <svg className="mr-4 ml-auto h-[31px] w-8" viewBox="0 0 32 31" fill="none" stroke="#5b5b66" strokeWidth="2.600" strokeLinejoin="round">
          <path d="M14.400 2.600Q16 0 17.600 2.600L21 10L29 11.200Q31.500 12 29.800 14.200L24.300 19.700L25.700 27.500Q25.700 30.500 23 29.400L16 25.600L9 29.400Q6.300 30.500 6.300 27.500L7.700 19.700L2.200 14.200Q.500 12 3 11.200L11 10Z" />
        </svg>
      </div>
      <div className="ml-auto flex items-center pr-9">
        <svg className="h-[31px] w-[27px]" viewBox="0 0 27 31" fill="none" stroke="#5b5b66" strokeWidth="2.600" strokeLinecap="round" strokeLinejoin="round">
          <path d="M13.500 1.500V21M4.500 12.500L13.500 21.500L22.500 12.500M1.500 23.500V26Q1.500 29 4.500 29H22.500Q25.500 29 25.500 26V23.500" />
        </svg>
        <svg className="ml-[45px] h-8 w-[29px]" viewBox="0 0 29 32">
          <path d="M14.500 0C10 3.500 5 4 .500 4C.300 16 .500 25 14.500 32C28.500 25 28.700 16 28.500 4C24 4 19 3.500 14.500 0Z" fill="#7b1510" />
          <path d="M6.500 10V15.500Q6.500 18.500 9.500 18.500Q12.500 18.500 13.800 16.500M13.200 9V15" fill="none" stroke="#fff" strokeWidth="2" />
          <circle cx="18" cy="14.500" r="4" fill="none" stroke="#fff" strokeWidth="2" />
        </svg>
        <div className="relative ml-[42px] size-[31px]">
          <svg className="size-[31px]" viewBox="0 0 31 31">
            <rect x="0" y="0" width="31" height="31" rx="8" />
            <circle cx="8.500" cy="22.500" r="6" fill="#fff" />
            <circle cx="22.500" cy="22.500" r="6" fill="#fff" />
          </svg>
          <span className="absolute -top-[11px] left-[11px] flex h-6 w-7 items-center justify-center rounded-[3px] bg-[#db3e3a] text-[20px] leading-6 text-white shadow-[0_1px_0_#bbb]">1</span>
        </div>
        <svg className="ml-10 size-8" viewBox="0 0 32 32">
          <rect width="32" height="32" rx="3" fill="#2c5fdb" />
          <path d="M5.500 3.500H26.500V17C26.500 23 21 27.500 16 29.500C11 27.500 5.500 23 5.500 17Z" fill="#fff" />
          <path d="M16 6.500H23.500V17C23.500 21 20 24.500 16 26Z" fill="#2c5fdb" />
          <rect x="16" y="17" width="16" height="15" rx="4" fill="#f9f9fb" />
          <rect x="18.500" y="22.500" width="12" height="8.500" rx="1" fill="#4a4a4f" />
          <path d="M21 22.500V20.500A3.500 3.500 0 0 1 28 20.500V22.500" fill="none" stroke="#f9f9fb" strokeWidth="5" />
          <path d="M21 22.500V20.500A3.500 3.500 0 0 1 28 20.500V22.500" fill="none" stroke="#4a4a4f" strokeWidth="2" />
        </svg>
        <svg className="ml-11 h-5 w-6" viewBox="0 0 24 20" stroke="#5b5b66" strokeWidth="2.400" strokeLinecap="round">
          <path d="M1.200 2H22.800M1.200 10H22.800M1.200 18H22.800" />
        </svg>
      </div>
    </div>
  );
}

export default function App() {
  return (
    <div className="h-[2318px] w-[3296px] overflow-hidden bg-white pt-[76px] pl-[112px] font-['Inter','Liberation_Sans',sans-serif]">
      <div className="h-[2094px] w-[3072px] rounded-[20px] shadow-[0_0_0_1px_rgba(0,0,0,0.25),0_36px_72px_rgba(0,0,0,0.5),0_0_40px_rgba(0,0,0,0.12)]">
        <div className="h-full overflow-hidden rounded-[20px] bg-white">
          <TabStrip />
          <Toolbar />
          <main className="relative h-[1924px] pt-[17px] pl-[516px] text-[32px] text-[#4a4a4a]">
            <div className="absolute top-0.5 left-0 h-[50px] w-11 rounded-br-lg bg-[#f5f5f5] pt-[14px] pl-[7px]">
              <div className="h-7 w-7 rounded bg-[#fafafa] p-1">
                <div className="size-5 bg-white" />
              </div>
            </div>
            <h1 className="h-[97px] text-[62px] leading-[72px] font-semibold tracking-[-1.2px] text-[#363636]">Global unemployment</h1>
            <div className="relative h-[870px] w-[1980px]">
              <WorldMap />
              <MenuDots className="top-5 left-[1872px]" />
            </div>
            <div className="flex h-[70px] items-start pl-[112px]">
              <span className="mt-[25px] w-[85px] leading-[40px] tracking-[-0.4px]">Year:</span>
              <div className="relative mt-[30px] h-3 w-80 rounded-full border-2 border-[#8f8f9d] bg-[#e9e9ed]">
                <div className="absolute -top-0.5 -left-0.5 h-3 w-[104px] rounded-l-full border-2 border-[#2b66dd] bg-[#3478f6]" />
                <div className="absolute -top-4 left-[82px] size-10 rounded-full border-4 border-white bg-[#676774] shadow-[0_3px_6px_rgba(0,0,0,0.45)]" />
              </div>
              <span className="mt-[25px] leading-[40px]">2000</span>
            </div>
            <div className="flex h-[747px] items-start">
              <div className="relative h-[560px] w-[894px]">
                <LineChart />
                <MenuDots className="-top-[2px] left-[814px] opacity-20" />
              </div>
              <p className="mt-[24px] w-[1120px] leading-[48px] tracking-[-0.04px]">
                2020 and 2021 are tough years due to the pandemic, the unemployment
                <br />
                rate increased a lot.
              </p>
            </div>
            <h2 className="h-[111px] text-[40px] leading-[72px] tracking-[-0.6px]">Sources</h2>
            <p className="leading-[48px] tracking-[-0.3px] whitespace-nowrap">https://www.statista.com/statistics/279777/global-unemployment-rate/</p>
          </main>
        </div>
      </div>
    </div>
  );
}
